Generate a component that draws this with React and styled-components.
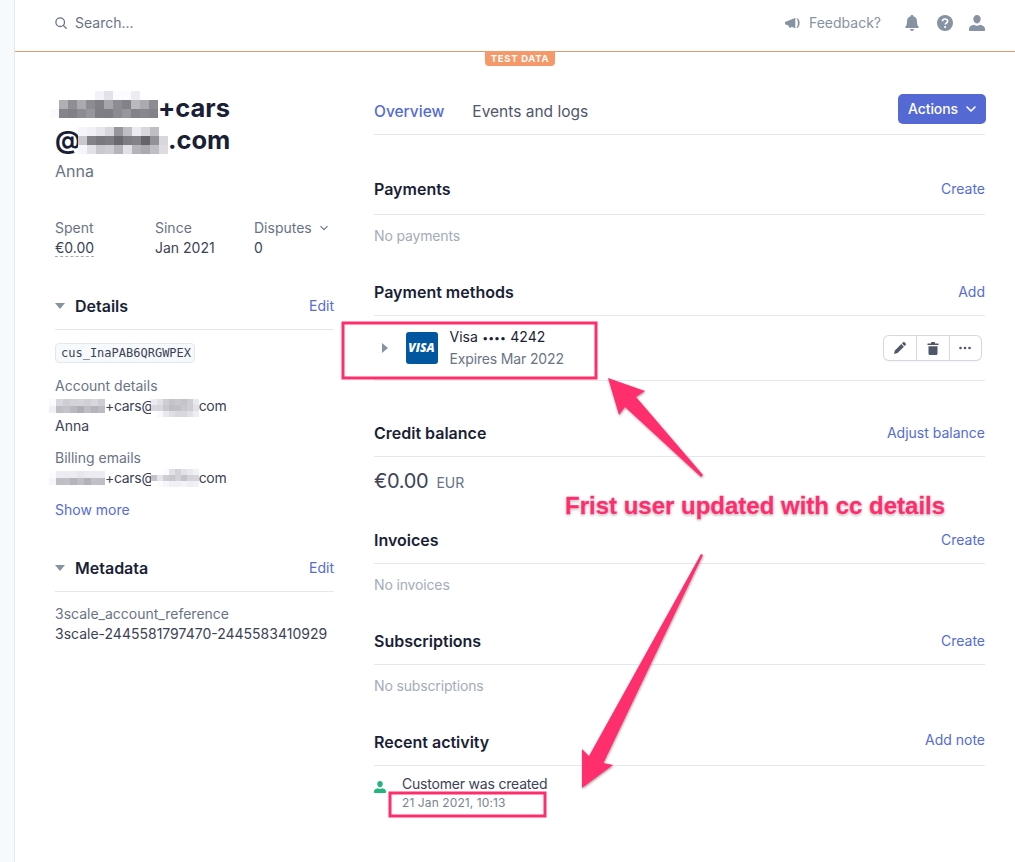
import React from "react";
import styled, { createGlobalStyle } from "styled-components";

const Global = createGlobalStyle`
  html, body { margin: 0; padding: 0; background: #fff; }
  body { font-family: Inter, "Liberation Sans", sans-serif; font-size: 14px; line-height: 20px; color: #3c4257; }
`;

const Page = styled.div`
  position: relative;
  width: 1015px;
  height: 862px;
  overflow: hidden;
  display: flex;
`;
const Rail = styled.div`
  width: 14px;
  flex: none;
  background: #f7fafc;
  border-right: 1px solid #e3e8ee;
`;
const Main = styled.div`
  flex: 1;
  display: flex;
  flex-direction: column;
  min-width: 0;
`;

/* -------- top bar -------- */
const TopBar = styled.header`
  flex: none;
  border-bottom: 1px solid #e59a6b;
  display: flex;
  align-items: center;
  padding: 0 30px 6px 40px;
  height: 45px;
  position: relative;
`;
const SearchBox = styled.div`
  display: flex;
  align-items: center;
  gap: 8px;
  color: #697386;
  flex: 1;
`;
const Feedback = styled.div`
  display: flex;
  align-items: center;
  gap: 9px;
  color: #8792a2;
  margin-right: 24px;
`;
const TopIcons = styled.div`
  display: flex;
  align-items: center;
  gap: 16px;
`;
const BellSlot = styled.span`
  display: flex;
  margin-right: 2px;
`;
const TestBadge = styled.div`
  position: absolute;
  left: 470px;
  top: 51px;
  width: 70px;
  height: 15px;
  background: #f5986a;
  color: #fff;
  border-radius: 0 0 4px 4px;
  font-size: 9.5px;
  line-height: 16px;
  font-weight: 700;
  letter-spacing: 0.7px;
  text-align: center;
`;

/* -------- content columns -------- */
const Columns = styled.div`
  display: grid;
  grid-template-columns: 279px 611px;
  column-gap: 40px;
  padding: 40px 0 0 40px;
`;
const Side = styled.aside`
  display: flex;
  flex-direction: column;
`;
const Title = styled.h1`
  margin: 0;
  font-size: 25.5px;
  line-height: 32px;
  font-weight: 700;
  color: #1a1f36;
`;
const TitleLine = styled.div`
  display: flex;
  align-items: center;
  height: 32px;
`;
const Subtitle = styled.div`
  font-size: 16px;
  line-height: 24px;
  color: #697386;
  margin-top: 3px;
`;
const Stats = styled.div`
  display: flex;
  margin-top: 35px;
`;
const Stat = styled.div`
  width: ${(p) => p.$w}px;
  flex: none;
`;
const Label = styled.div`
  color: #697386;
  display: flex;
  align-items: center;
  gap: 8px;
`;
const Dashed = styled.span`
  border-bottom: 1px dashed #a3acb9;
  display: inline-block;
  line-height: 17px;
`;
const SideHead = styled.div`
  display: flex;
  align-items: center;
  height: 24px;
  padding-bottom: 11px;
  border-bottom: 1px solid #e3e8ee;
  margin-top: ${(p) => p.$top}px;
`;
const Caret = styled.span`
  width: 0;
  height: 0;
  border-left: 5.5px solid transparent;
  border-right: 5.5px solid transparent;
  border-top: 6px solid #8792a2;
  margin-right: 10px;
`;
const HeadTitle = styled.h2`
  margin: 0;
  font-size: 16px;
  line-height: 24px;
  font-weight: 600;
  color: #1a1f36;
  flex: 1;
`;
const Link = styled.a`
  color: #556cd6;
  font-size: 14px;
  line-height: 20px;
  margin-bottom: ${(p) => p.$lift || 0}px;
`;
const Chip = styled.code`
  display: inline-block;
  align-self: flex-start;
  margin-top: 13px;
  height: 20px;
  box-sizing: border-box;
  padding: 0 3px 0 5px;
  font-family: "DejaVu Sans Mono", "Liberation Mono", monospace;
  font-size: 12px;
  line-height: 19px;
  color: #3c4257;
  background: #f7fafc;
  border: 1px solid #e3e8ee;
  border-radius: 4px;
`;
const Field = styled.div`
  margin-top: ${(p) => p.$top}px;
`;
const Line = styled.div`
  display: flex;
  align-items: center;
  height: 20px;
  white-space: nowrap;
  letter-spacing: -0.3px;
`;
const MosaicSvg = styled.svg`
  display: block;
  flex: none;
  margin-left: ${(p) => p.$left || 0}px;
  margin-right: ${(p) => p.$right || 0}px;
  margin-top: ${(p) => p.$top || 0}px;
`;

const Content = styled.section`
  display: flex;
  flex-direction: column;
`;
const Tabs = styled.nav`
  display: flex;
  align-items: center;
  height: 43px;
  border-bottom: 1px solid #e3e8ee;
  box-sizing: border-box;
  padding-bottom: 3px;
`;
const Tab = styled.span`
  font-size: 15.5px;
  line-height: 24px;
  font-weight: ${(p) => (p.$active ? 500 : 400)};
  color: ${(p) => (p.$active ? "#556cd6" : "#4f566b")};
  margin-right: 28px;
`;
const Actions = styled.button`
  margin-left: auto;
  margin-right: -1px;
  margin-top: -5px;
  width: 88px;
  height: 30px;
  border: 0;
  border-radius: 5px;
  background: #5469d4;
  color: #fff;
  font: 500 14px/20px Inter, sans-serif;
  letter-spacing: -0.1px;
  display: flex;
  align-items: center;
  justify-content: center;
  gap: 8px;
  padding: 0;
`;
const SectionHead = styled.div`
  display: flex;
  align-items: center;
  margin-top: ${(p) => p.$top}px;
  height: 24px;
  padding-bottom: ${(p) => p.$pad || 11}px;
  border-bottom: 1px solid #e3e8ee;
`;
const Empty = styled.div`
  color: #a3acb9;
  margin-top: 11px;
  letter-spacing: -0.15px;
`;
const CardRow = styled.div`
  height: 64px;
  display: flex;
  align-items: center;
  border-bottom: 1px solid #e3e8ee;
  padding: 0 4px 0 8px;
`;
const Expand = styled.span`
  width: 0;
  height: 0;
  border-top: 5.5px solid transparent;
  border-bottom: 5.5px solid transparent;
  border-left: 6.5px solid #8792a2;
  margin-right: 17.5px;
`;
const VisaLogo = styled.div`
  width: 32px;
  height: 32px;
  border-radius: 3px;
  background: #00579f;
  color: #fff;
  font: italic 800 12px/32px "Open Sans", "Liberation Sans", sans-serif;
  text-align: center;
  margin-right: 12px;
`;
const CardText = styled.div`
  flex: 1;
`;
const CardName = styled.div`
  color: #1a1f36;
`;
const CardDots = styled.span`
  font-size: 10.5px;
  margin: 0 0.5px;
`;
const CardMeta = styled.div`
  color: #697386;
  letter-spacing: -0.15px;
`;
const ButtonGroup = styled.div`
  display: flex;
  height: 24px;
  border-radius: 5px;
  box-shadow: 0 0 0 1px #d5d9df, 0 1px 2px rgba(60, 66, 87, 0.15);
  background: #fff;
`;
const GroupButton = styled.div`
  width: 32.5px;
  box-sizing: border-box;
  display: flex;
  align-items: center;
  justify-content: center;
  & + & { border-left: 1px solid #d5d9df; }
`;
const Amount = styled.div`
  display: flex;
  align-items: baseline;
  margin-top: 10px;
  font-size: 20px;
  line-height: 28px;
  letter-spacing: -0.3px;
  color: #3c4257;
  gap: 8px;
`;
const Currency = styled.span`
  font-size: 14px;
  letter-spacing: 0;
  color: #697386;
`;
const Activity = styled.div`
  display: flex;
  margin-top: 8px;
`;
const ActivityIcon = styled.div`
  width: 28px;
  padding-top: 4px;
  flex: none;
`;
const ActivityText = styled.div`
  letter-spacing: -0.2px;
`;
const ActivityDate = styled.div`
  font-size: 12px;
  line-height: 18px;
  color: #7a8394;
  letter-spacing: 0.1px;
`;

/* -------- annotations drawn over the screenshot -------- */
const Overlay = styled.svg`
  position: absolute;
  left: 0;
  top: 0;
  pointer-events: none;
`;
const Note = styled.div`
  position: absolute;
  left: 565px;
  top: 490px;
  white-space: nowrap;
  font: 700 24px/32px "Liberation Sans", Arial, sans-serif;
  color: #ff2d6c;
  -webkit-text-stroke: 0.3px #ff2d6c;
  text-shadow: 0 0 2px #fff, 0 0 2px #fff, 0 1px 3px rgba(0, 0, 0, 0.45);
`;

const Mosaic = ({ cells, size, left, right, top }) => {
  const rows = cells.length;
  const cols = cells[0].length;
  return (
    <MosaicSvg $left={left} $right={right} $top={top} width={cols * size} height={rows * size} aria-hidden="true">
      {cells.map((row, y) =>
        row.map((v, x) => <rect key={x + "-" + y} x={x * size} y={y * size} width={size} height={size} fill={`rgb(${v},${v},${Math.min(v + 6, 255)})`} />)
      )}
    </MosaicSvg>
  );
};

const heading1 = [
  [255, 255, 255, 255, 255, 242, 226, 250, 252, 236, 255, 255],
  [255, 175, 142, 170, 140, 128, 165, 140, 130, 185, 170, 140],
  [250, 132, 128, 140, 150, 126, 125, 138, 150, 130, 135, 130],
];
const heading2 = [
  [245, 240, 230, 215, 150, 190, 235, 215, 190, 255],
  [200, 130, 120, 125, 105, 125, 130, 100, 145, 215],
  [245, 225, 200, 205, 180, 225, 180, 170, 190, 220],
];
const small1 = [
  [250, 215, 205, 210, 212, 208, 215, 205],
  [240, 190, 195, 185, 175, 190, 180, 188],
];
const small2 = [
  [235, 225, 205, 195, 200, 195, 205, 232],
  [215, 215, 200, 190, 192, 200, 205, 225],
  [255, 248, 232, 222, 215, 215, 225, 238],
];
const small3 = [
  [252, 235, 235, 235, 230, 235, 235, 235],
  [245, 190, 192, 180, 190, 178, 192, 190],
];
const small4 = [
  [255, 255, 250, 225, 210, 225, 232, 240],
  [195, 228, 205, 200, 210, 195, 210, 212],
  [255, 250, 245, 240, 240, 242, 238, 240],
];

const SearchIcon = () => (
  <svg width="12" height="12" viewBox="0 0 12 12" fill="none" stroke="#697386" strokeWidth="1.3" strokeLinecap="round">
    <circle cx="5.2" cy="5.2" r="4.3" />
    <path d="M8.4 8.4L11.2 11.2" />
  </svg>
);
const MegaphoneIcon = () => (
  <svg width="15" height="12" viewBox="0 0 16 12" fill="#8792a2">
    <path d="M0 5L10 .8C11.5.2 11 1 11 3v6c0 2 .5 2.8-1 2.2L7 10c-.3 1-1.3 1.2-2.2.8-.8-.4-1-1.2-.7-2L0 7.2z" />
    <path d="M12 .6c2.4 0 3.6 2.4 3.6 5.4s-1.2 5.4-3.6 5.4c1.2-1.4 1.7-3.2 1.7-5.4S13.200 2 12 .6z" />
  </svg>
);
const BellIcon = () => (
  <svg width="14" height="16" viewBox="0 0 14 16" fill="#8792a2">
    <path d="M7 0c.8 0 1.300.5 1.400 1.200C10.700 1.800 12 3.800 12 6.200c0 3.300.6 4.600 1.600 5.500.5.500.2 1.300-.5 1.300H.9c-.7 0-1-.8-.5-1.300C1.400 10.800 2 9.500 2 6.200c0-2.400 1.300-4.400 3.600-5C5.700.5 6.200 0 7 0z" />
    <path d="M5 14h4c0 1.200-.9 2-2 2s-2-.8-2-2z" />
  </svg>
);
const HelpIcon = () => (
  <svg width="16" height="16" viewBox="0 0 16 16">
    <circle cx="8" cy="8" r="8" fill="#8792a2" />
    <path d="M5.500 6.200C5.600 4.700 6.600 4 8 4c1.500 0 2.600.8 2.600 2.200 0 1.900-2.400 1.900-2.400 3.400" fill="none" stroke="#fff" strokeWidth="1.700" />
    <circle cx="8.100" cy="12" r="1.100" fill="#fff" />
  </svg>
);
const UserIcon = ({ color = "#8792a2", w = 16, h = 16 }) => (
  <svg width={w} height={h} viewBox="0 0 16 16" fill={color}>
    <path d="M8 0c2.200 0 3.700 1.700 3.700 4S10.200 8.500 8 8.500 4.300 6.300 4.300 4 5.800 0 8 0z" />
    <path d="M0 14c0-2.600 2.500-3.600 5-4.200.8.600 1.900 1 3 1s2.200-.4 3-1c2.500.6 5 1.600 5 4.200v1c0 .6-.4 1-1 1H1c-.6 0-1-.4-1-1z" />
  </svg>
);
const Chevron = ({ color = "#fff", size = 10, width = 1.6 }) => (
  <svg width={size} height={size} viewBox="0 0 10 10" fill="none" stroke={color} strokeWidth={width} strokeLinecap="round" strokeLinejoin="round">
    <path d="M1 3l4 4 4-4" />
  </svg>
);
const PencilIcon = () => (
  <svg width="12" height="12" viewBox="0 0 12 12" fill="#4f566b">
    <path d="M0 12l.9-3.500 6.400-6.400 2.600 2.600-6.400 6.400z" />
    <path d="M8 1.400L9.100.3c.4-.4 1-.4 1.400 0l1.200 1.200c.4.4.4 1 0 1.400l-1.100 1.100z" />
  </svg>
);
const TrashIcon = () => (
  <svg width="12" height="13" viewBox="0 0 12 13" fill="#4f566b">
    <path d="M4 1.500V.8c0-.4.3-.8.800-.8h2.400c.5 0 .8.400.8.800v.7h3c.4 0 .7.300.7.700s-.3.700-.7.700H1c-.4 0-.7-.3-.7-.7s.3-.7.700-.7z" />
    <path d="M1.500 4.200h9v7.300c0 .8-.6 1.500-1.400 1.500H2.900c-.8 0-1.400-.7-1.400-1.500z" />
  </svg>
);
const DotsIcon = () => (
  <svg width="12" height="4" viewBox="0 0 12 4" fill="#4f566b">
    <circle cx="1.500" cy="2" r="1.300" />
    <circle cx="6" cy="2" r="1.300" />
    <circle cx="10.500" cy="2" r="1.300" />
  </svg>
);

const App = () => {
  return (
    <Page>
      <Global />
      <Rail />
      <Main>
        <TopBar>
          <SearchBox>
            <SearchIcon />
            Search...
          </SearchBox>
          <Feedback>
            <MegaphoneIcon />
            Feedback?
          </Feedback>
          <TopIcons>
            <BellSlot>
              <BellIcon />
            </BellSlot>
            <HelpIcon />
            <UserIcon />
          </TopIcons>
          <TestBadge>TEST DATA</TestBadge>
        </TopBar>
        <Columns>
          <Side>
            {/* --------Customer summary------- */}
            <Title>
              <TitleLine>
                <Mosaic cells={heading1} size={9} left={-5} top={-7} />
                +cars
              </TitleLine>
              <TitleLine>
                @<Mosaic cells={heading2} size={9} left={-3} />
                .com
              </TitleLine>
            </Title>
            <Subtitle>Anna</Subtitle>
            <Stats>
              <Stat $w={100}>
                <Label>Spent</Label>
                <Dashed>€0.00</Dashed>
              </Stat>
              <Stat $w={99}>
                <Label>Since</Label>
                <div>Jan 2021</div>
              </Stat>
              <Stat $w={80}>
                <Label>
                  Disputes <Chevron color="#697386" size={8} width={1.4} />
                </Label>
                <div>0</div>
              </Stat>
            </Stats>

            {/* --------Details------- */}
            <SideHead $top={36}>
              <Caret />
              <HeadTitle>Details</HeadTitle>
              <Link>Edit</Link>
            </SideHead>
            <Chip>cus_InaPAB6QRGWPEX</Chip>
            <Field $top={13}>
              <Label>Account details</Label>
              <Line>
                <Mosaic cells={small1} size={7} left={-6} />
                +cars@
                <Mosaic cells={small2} size={6} left={-4} top={4} />
                com
              </Line>
              <div>Anna</div>
            </Field>
            <Field $top={12}>
              <Label>Billing emails</Label>
              <Line>
                <Mosaic cells={small3} size={7} left={-6} />
                +cars@
                <Mosaic cells={small4} size={6} left={-4} />
                com
              </Line>
            </Field>
            <Field $top={12}>
              <Link>Show more</Link>
            </Field>

            {/* --------Metadata------- */}
            <SideHead $top={36}>
              <Caret />
              <HeadTitle>Metadata</HeadTitle>
              <Link>Edit</Link>
            </SideHead>
            <Field $top={12}>
              <Label>3scale_account_reference</Label>
              <div>3scale-2445581797470-2445583410929</div>
            </Field>
          </Side>

          <Content>
            {/* --------Tabs------- */}
            <Tabs>
              <Tab $active>Overview</Tab>
              <Tab>Events and logs</Tab>
              <Actions>
                Actions <Chevron />
              </Actions>
            </Tabs>

            <SectionHead $top={42} $pad={13}>
              <HeadTitle>Payments</HeadTitle>
              <Link>Create</Link>
            </SectionHead>
            <Empty>No payments</Empty>

            <SectionHead $top={34}>
              <HeadTitle>Payment methods</HeadTitle>
              <Link>Add</Link>
            </SectionHead>
            <CardRow>
              <Expand />
              <VisaLogo>VISA</VisaLogo>
              <CardText>
                <CardName>
                  Visa <CardDots>••••</CardDots> 4242
                </CardName>
                <CardMeta>Expires Mar 2022</CardMeta>
              </CardText>
              <ButtonGroup>
                <GroupButton>
                  <PencilIcon />
                </GroupButton>
                <GroupButton>
                  <TrashIcon />
                </GroupButton>
                <GroupButton>
                  <DotsIcon />
                </GroupButton>
              </ButtonGroup>
            </CardRow>

            <SectionHead $top={40}>
              <HeadTitle>Credit balance</HeadTitle>
              <Link>Adjust balance</Link>
            </SectionHead>
            <Amount>
              €0.00 <Currency>EUR</Currency>
            </Amount>

            <SectionHead $top={31}>
              <HeadTitle>Invoices</HeadTitle>
              <Link>Create</Link>
            </SectionHead>
            <Empty>No invoices</Empty>

            <SectionHead $top={34}>
              <HeadTitle>Subscriptions</HeadTitle>
              <Link>Create</Link>
            </SectionHead>
            <Empty>No subscriptions</Empty>

            <SectionHead $top={34}>
              <HeadTitle>Recent activity</HeadTitle>
              <Link $lift={4}>Add note</Link>
            </SectionHead>
            <Activity>
              <ActivityIcon>
                <UserIcon color="#24b47e" w={12} h={12} />
              </ActivityIcon>
              <ActivityText>
                Customer was created
                <ActivityDate>21 Jan 2021, 10:13</ActivityDate>
              </ActivityText>
            </Activity>
          </Content>
        </Columns>
      </Main>

      {/* --------Annotations------- */}
      <Overlay width="1015" height="862" viewBox="0 0 1015 862">
        <defs>
          <filter id="arrowShadow" x="-20%" y="-20%" width="140%" height="140%">
            <feDropShadow dx="0.5" dy="1" stdDeviation="1" floodColor="#000" floodOpacity="0.4" />
          </filter>
        </defs>
        <rect x="343" y="323" width="253" height="55" fill="none" stroke="#ff2d6c" strokeWidth="3" />
        <rect x="390" y="793" width="155" height="23" fill="none" stroke="#ff2d6c" strokeWidth="3" />
        <polygon filter="url(#arrowShadow)" fill="#ff2d6c" points="608,378 645,391 636,397 703,475 701,477 625,407 619,415" />
        <polygon filter="url(#arrowShadow)" fill="#ff2d6c" points="701,554 703,555 603.500,763 613,765 582,788 582,749 589,756" />
      </Overlay>
      <Note>Frist user updated with cc details</Note>
    </Page>
  );
};

export default App;
